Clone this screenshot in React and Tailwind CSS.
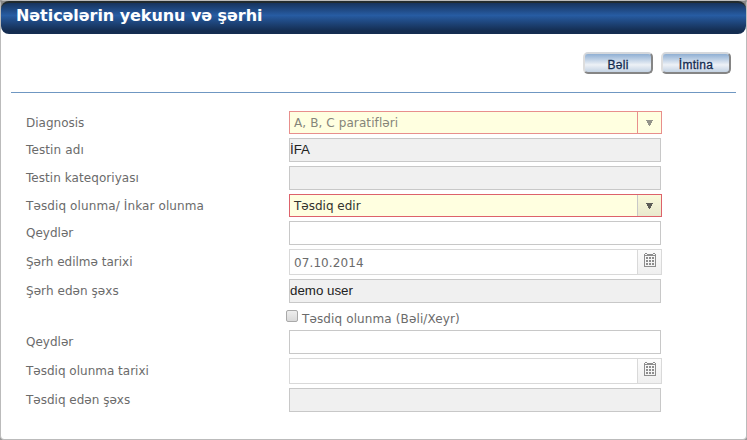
const sans = "font-['DejaVu_Sans',sans-serif] text-[12px]";

function Row({ label, height, labelClass = "pt-px", textClass = "", children }) {
  return (
    <div className={`flex ${height}`}>
      <div className={`w-[263px] shrink-0 whitespace-nowrap leading-[22px] text-[#6b6b6b] ${sans} ${labelClass}`}>
        <span className={textClass}>{label}</span>
      </div>
      {children}
    </div>
  );
}

function Input({ value = "", readOnly = false }) {
  return (
    <div className={`h-6 w-[372px] border border-[#c8c8c8] font-['Liberation_Sans',sans-serif] text-[13.33px] leading-[21px] text-[#222] ${readOnly ? "bg-[#f0f0f0]" : "bg-white"}`}>
      {value}
    </div>
  );
}

function Select({ value, disabled = false }) {
  return (
    <div className={`flex h-[23px] w-[373px] border bg-[#ffffe0] ${disabled ? "border-[#e88f8c]" : "border-[#dd626b]"}`}>
      <div className={`grow pl-1 leading-[22px] ${sans} ${disabled ? "text-[#85857a]" : "text-[#33332e]"}`}>
        <span className={disabled ? "tracking-[0.1px]" : ""}>{value}</span>
      </div>
      <div className={`flex w-6 items-center justify-center border-l ${disabled ? "border-[#e88f8c]" : "border-[#c8c8c8] bg-linear-to-b from-[#fafada] to-[#e9e9ce]"}`}>
        <svg width="7" height="6" viewBox="0 0 7 6" shapeRendering="crispEdges" className={disabled ? "text-[#94948a]" : "text-[#5c5c58]"}>
          <path d="M0 0H7V1H6V3H5V5H4V6H3V5H2V3H1V1H0Z" fill="currentColor" />
        </svg>
      </div>
    </div>
  );
}

function CalendarIcon() {
  const cells = [0, 1, 2];
  return (
    <svg width="12" height="14" viewBox="0 0 12 14" shapeRendering="crispEdges" fill="#8d8d8d">
      <path d="M1 0H3V1H9V0H11V1H12V14H0V1H1ZM1 3V13H11V3Z" fillRule="evenodd" />
      <path d="M1 1H3V2H1ZM9 1H11V2H9ZM3 0H9V1H3Z" fill="#fafafa" />
      {cells.map((r) => cells.map((c) => (
        <rect key={`${r}${c}`} x={2 + c * 3} y={4 + r * 3} width="2" height="2" />
      )))}
    </svg>
  );
}

function DateField({ value = "" }) {
  return (
    <div className="flex h-[26px] w-[373px] border border-[#d9d9d9] bg-white">
      <div className={`grow pl-1 leading-[26px] tracking-[0.1px] text-[#6b6b6b] ${sans}`}>{value}</div>
      <div className="flex w-6 justify-center border-l border-[#d9d9d9] bg-linear-to-b from-[#fcfcfc] to-[#efefef] pt-[3px]">
        <CalendarIcon />
      </div>
    </div>
  );
}

function Button({ children }) {
  return (
    <div className="flex h-[22px] w-[70px] items-center justify-center rounded-[5px] border-2 border-t-[#d5d8dc] border-r-[#858585] border-b-[#858585] border-l-[#dddddd] bg-linear-to-b from-[#8fafd3] via-[#edf1f6] via-60% to-[#c3d2e3] pt-[3px] font-['Liberation_Sans',sans-serif] text-[12px] tracking-[0.3px] text-[#142c50] [-webkit-text-stroke:0.3px_#142c50]">
      {children}
    </div>
  );
}

export default function App() {
  return (
    <div className="h-[440px] w-[747px] overflow-hidden bg-[#999]">
      <div className="flex h-full w-full flex-col rounded-[4px] border border-[#bbbbbb] bg-white">
        <div className="h-[33px] bg-linear-to-b from-[#888] from-30% to-white to-30%">
          <div className="h-full rounded-[8px] border-t-2 border-[#222b2e] bg-linear-to-b from-[#17345e] via-[#275ca3] via-40% to-[#142d51] to-90% pl-[15px] font-['DejaVu_Sans',sans-serif] text-[16px] leading-[26px] font-bold tracking-[-0.06px] text-white">
            <span>Nəticələrin yekunu və şərhi</span>
          </div>
        </div>
        <div className="mx-[10px] flex h-[59px] justify-end gap-2 border-b border-[#6f97c2] pt-[18px] pr-[5px]">
          <Button>Bəli</Button>
          <Button>İmtina</Button>
        </div>
        <div className="flex flex-col gap-1 pt-[18px] pl-[25px]">
          <Row label="Diagnosis" height="h-[23px]"><Select value="A, B, C paratifləri" disabled /></Row>
          <Row label="Testin adı" height="h-6" textClass="tracking-[0.12px]"><Input value="İFA" readOnly /></Row>
          <Row label="Testin kateqoriyası" height="h-6" textClass="tracking-[0.06px]"><Input readOnly /></Row>
          <Row label="Təsdiq olunma/ İnkar olunma" height="h-[23px]" textClass="tracking-[0.11px]"><Select value="Təsdiq edir" /></Row>
          <Row label="Qeydlər" height="h-6"><Input /></Row>
          <Row label="Şərh edilmə tarixi" height="h-[26px]" labelClass="pt-[2px]"><DateField value="07.10.2014" /></Row>
          <Row label="Şərh edən şəxs" height="h-6" textClass="tracking-[0.06px]"><Input value="demo user" readOnly /></Row>
          <div className="flex h-[19px] pt-[3px] pl-[260px]">
            <div className="h-3 w-3 rounded-[2px] border border-[#a9a9a9] bg-linear-to-b from-[#eeeeee] to-[#d9d9d9]" />
            <div className={`pl-1 leading-[18px] tracking-[0.12px] text-[#6b6b6b] ${sans}`}>Təsdiq olunma (Bəli/Xeyr)</div>
          </div>
          <Row label="Qeydlər" height="h-6"><Input /></Row>
          <Row label="Təsdiq olunma tarixi" height="h-[26px]" labelClass="pt-[2px]"><DateField /></Row>
          <Row label="Təsdiq edən şəxs" height="h-6"><Input readOnly /></Row>
        </div>
      </div>
    </div>
  );
}
